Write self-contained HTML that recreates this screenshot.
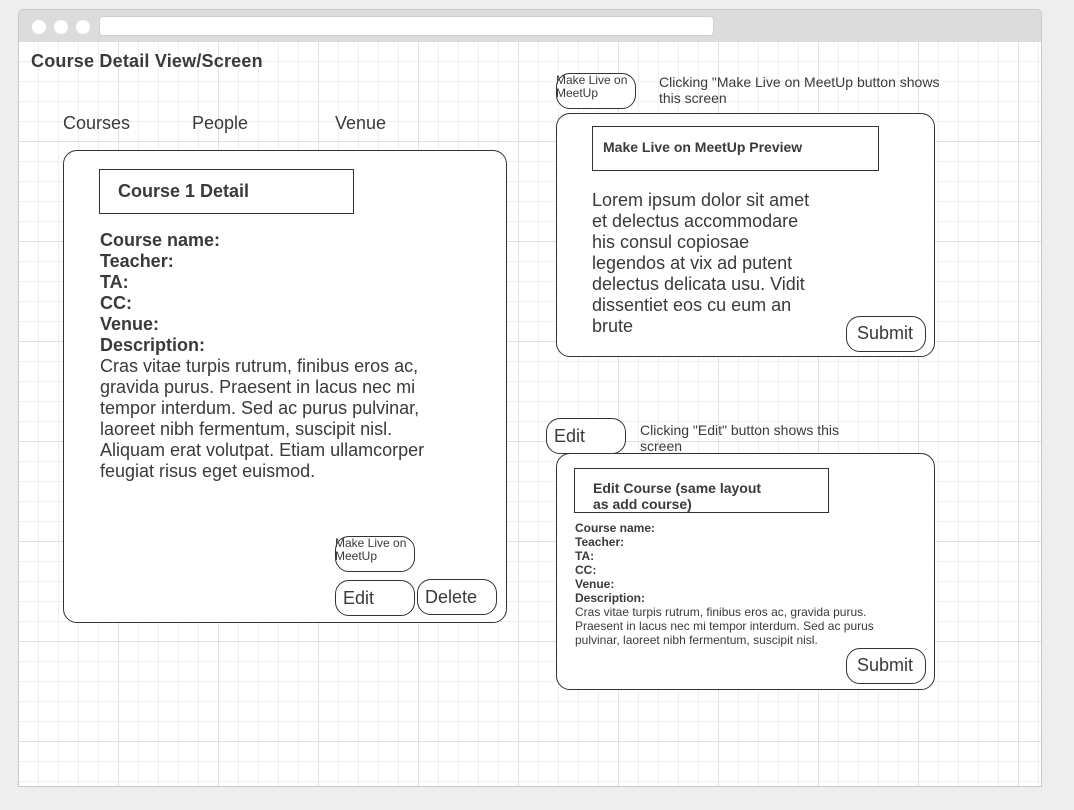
<!DOCTYPE html>
<html><head><meta charset="utf-8"><style>
*{margin:0;padding:0;box-sizing:border-box}
body{width:1074px;height:810px;background:#eeeeee;position:relative;overflow:hidden;font-family:"Liberation Sans",sans-serif;color:#3a3a3a}
.win{position:absolute;left:18px;top:9px;width:1024px;height:778px;border:1px solid #c8c8c8;border-radius:5px 5px 0 0;background:#dcdcdc;overflow:hidden}
.grid{position:absolute;left:0;top:32px;width:1024px;height:745px;background-color:#fff;
background-image:linear-gradient(#e0e0e0 1px,transparent 1px),linear-gradient(90deg,#e0e0e0 1px,transparent 1px),linear-gradient(#efefef 1px,transparent 1px),linear-gradient(90deg,#efefef 1px,transparent 1px);
background-size:100px 100px,100px 100px,20px 20px,20px 20px;background-position:-1px -1px}
.dot{position:absolute;top:10px;width:14px;height:14px;border-radius:50%;background:#fff}
.addr{position:absolute;left:80px;top:6px;width:615px;height:20px;background:#fff;border-radius:4px;border:1px solid #d0d0d0}
.a{position:absolute}
.panel{position:absolute;background:#fff;border:1px solid #333;border-radius:14px}
.box{position:absolute;background:#fff;border:1px solid #333}
.btn{position:absolute;background:#fff;border:1px solid #333;border-radius:14px}
b{font-weight:bold}
</style></head><body>
<div class="win">
<div class="dot" style="left:13px"></div><div class="dot" style="left:35px"></div><div class="dot" style="left:57px"></div>
<div class="addr"></div>
<div class="grid"></div>
</div>

<div class="a" style="left:31px;top:51px;font-size:18px;font-weight:bold;letter-spacing:0.2px">Course Detail View/Screen</div>
<div class="a" style="left:63px;top:113px;font-size:18px">Courses</div>
<div class="a" style="left:192px;top:113px;font-size:18px">People</div>
<div class="a" style="left:335px;top:113px;font-size:18px">Venue</div>

<div class="panel" style="left:63px;top:150px;width:444px;height:473px"></div>
<div class="box" style="left:99px;top:169px;width:255px;height:45px"></div>
<div class="a" style="left:118px;top:181px;font-size:18px;font-weight:bold">Course 1 Detail</div>
<div class="a" style="left:100px;top:230px;font-size:18px;line-height:21px;width:360px"><b>Course name:<br>Teacher:<br>TA:<br>CC:<br>Venue:<br>Description:</b><br>Cras vitae turpis rutrum, finibus eros ac, gravida purus. Praesent in lacus nec mi tempor interdum. Sed ac purus pulvinar, laoreet nibh fermentum, suscipit nisl. Aliquam erat volutpat. Etiam ullamcorper feugiat risus eget euismod.</div>
<div class="btn" style="left:335px;top:536px;width:80px;height:36px"></div>
<div class="a" style="left:335px;top:537px;font-size:12px;line-height:13px">Make Live on<br>MeetUp</div>
<div class="btn" style="left:335px;top:580px;width:80px;height:36px"></div>
<div class="a" style="left:343px;top:588px;font-size:18px">Edit</div>
<div class="btn" style="left:417px;top:579px;width:80px;height:36px"></div>
<div class="a" style="left:425px;top:587px;font-size:18px">Delete</div>

<div class="btn" style="left:556px;top:73px;width:80px;height:36px"></div>
<div class="a" style="left:556px;top:74px;font-size:12px;line-height:13px">Make Live on<br>MeetUp</div>
<div class="a" style="left:659px;top:74px;font-size:14px;line-height:16px;width:300px">Clicking "Make Live on MeetUp button shows this screen</div>
<div class="panel" style="left:556px;top:113px;width:379px;height:244px"></div>
<div class="box" style="left:592px;top:126px;width:287px;height:45px"></div>
<div class="a" style="left:603px;top:139px;font-size:14px;font-weight:bold">Make Live on MeetUp Preview</div>
<div class="a" style="left:592px;top:190px;font-size:18px;line-height:21px;width:228px">Lorem ipsum dolor sit amet et delectus accommodare his consul copiosae legendos at vix ad putent delectus delicata usu. Vidit dissentiet eos cu eum an brute</div>
<div class="btn" style="left:846px;top:316px;width:80px;height:36px"></div>
<div class="a" style="left:857px;top:323px;font-size:18px">Submit</div>

<div class="btn" style="left:546px;top:418px;width:80px;height:36px"></div>
<div class="a" style="left:554px;top:426px;font-size:18px">Edit</div>
<div class="a" style="left:640px;top:422px;font-size:14px;line-height:16px;width:240px">Clicking "Edit" button shows this screen</div>
<div class="panel" style="left:556px;top:453px;width:379px;height:237px"></div>
<div class="box" style="left:574px;top:468px;width:255px;height:45px"></div>
<div class="a" style="left:593px;top:480px;font-size:14px;line-height:16px;font-weight:bold">Edit Course (same layout<br>as add course)</div>
<div class="a" style="left:575px;top:521px;font-size:12px;line-height:14px;width:330px"><b>Course name:<br>Teacher:<br>TA:<br>CC:<br>Venue:<br>Description:</b><br>Cras vitae turpis rutrum, finibus eros ac, gravida purus. Praesent in lacus nec mi tempor interdum. Sed ac purus pulvinar, laoreet nibh fermentum, suscipit nisl.</div>
<div class="btn" style="left:846px;top:648px;width:80px;height:36px"></div>
<div class="a" style="left:857px;top:655px;font-size:18px">Submit</div>
</body></html>
